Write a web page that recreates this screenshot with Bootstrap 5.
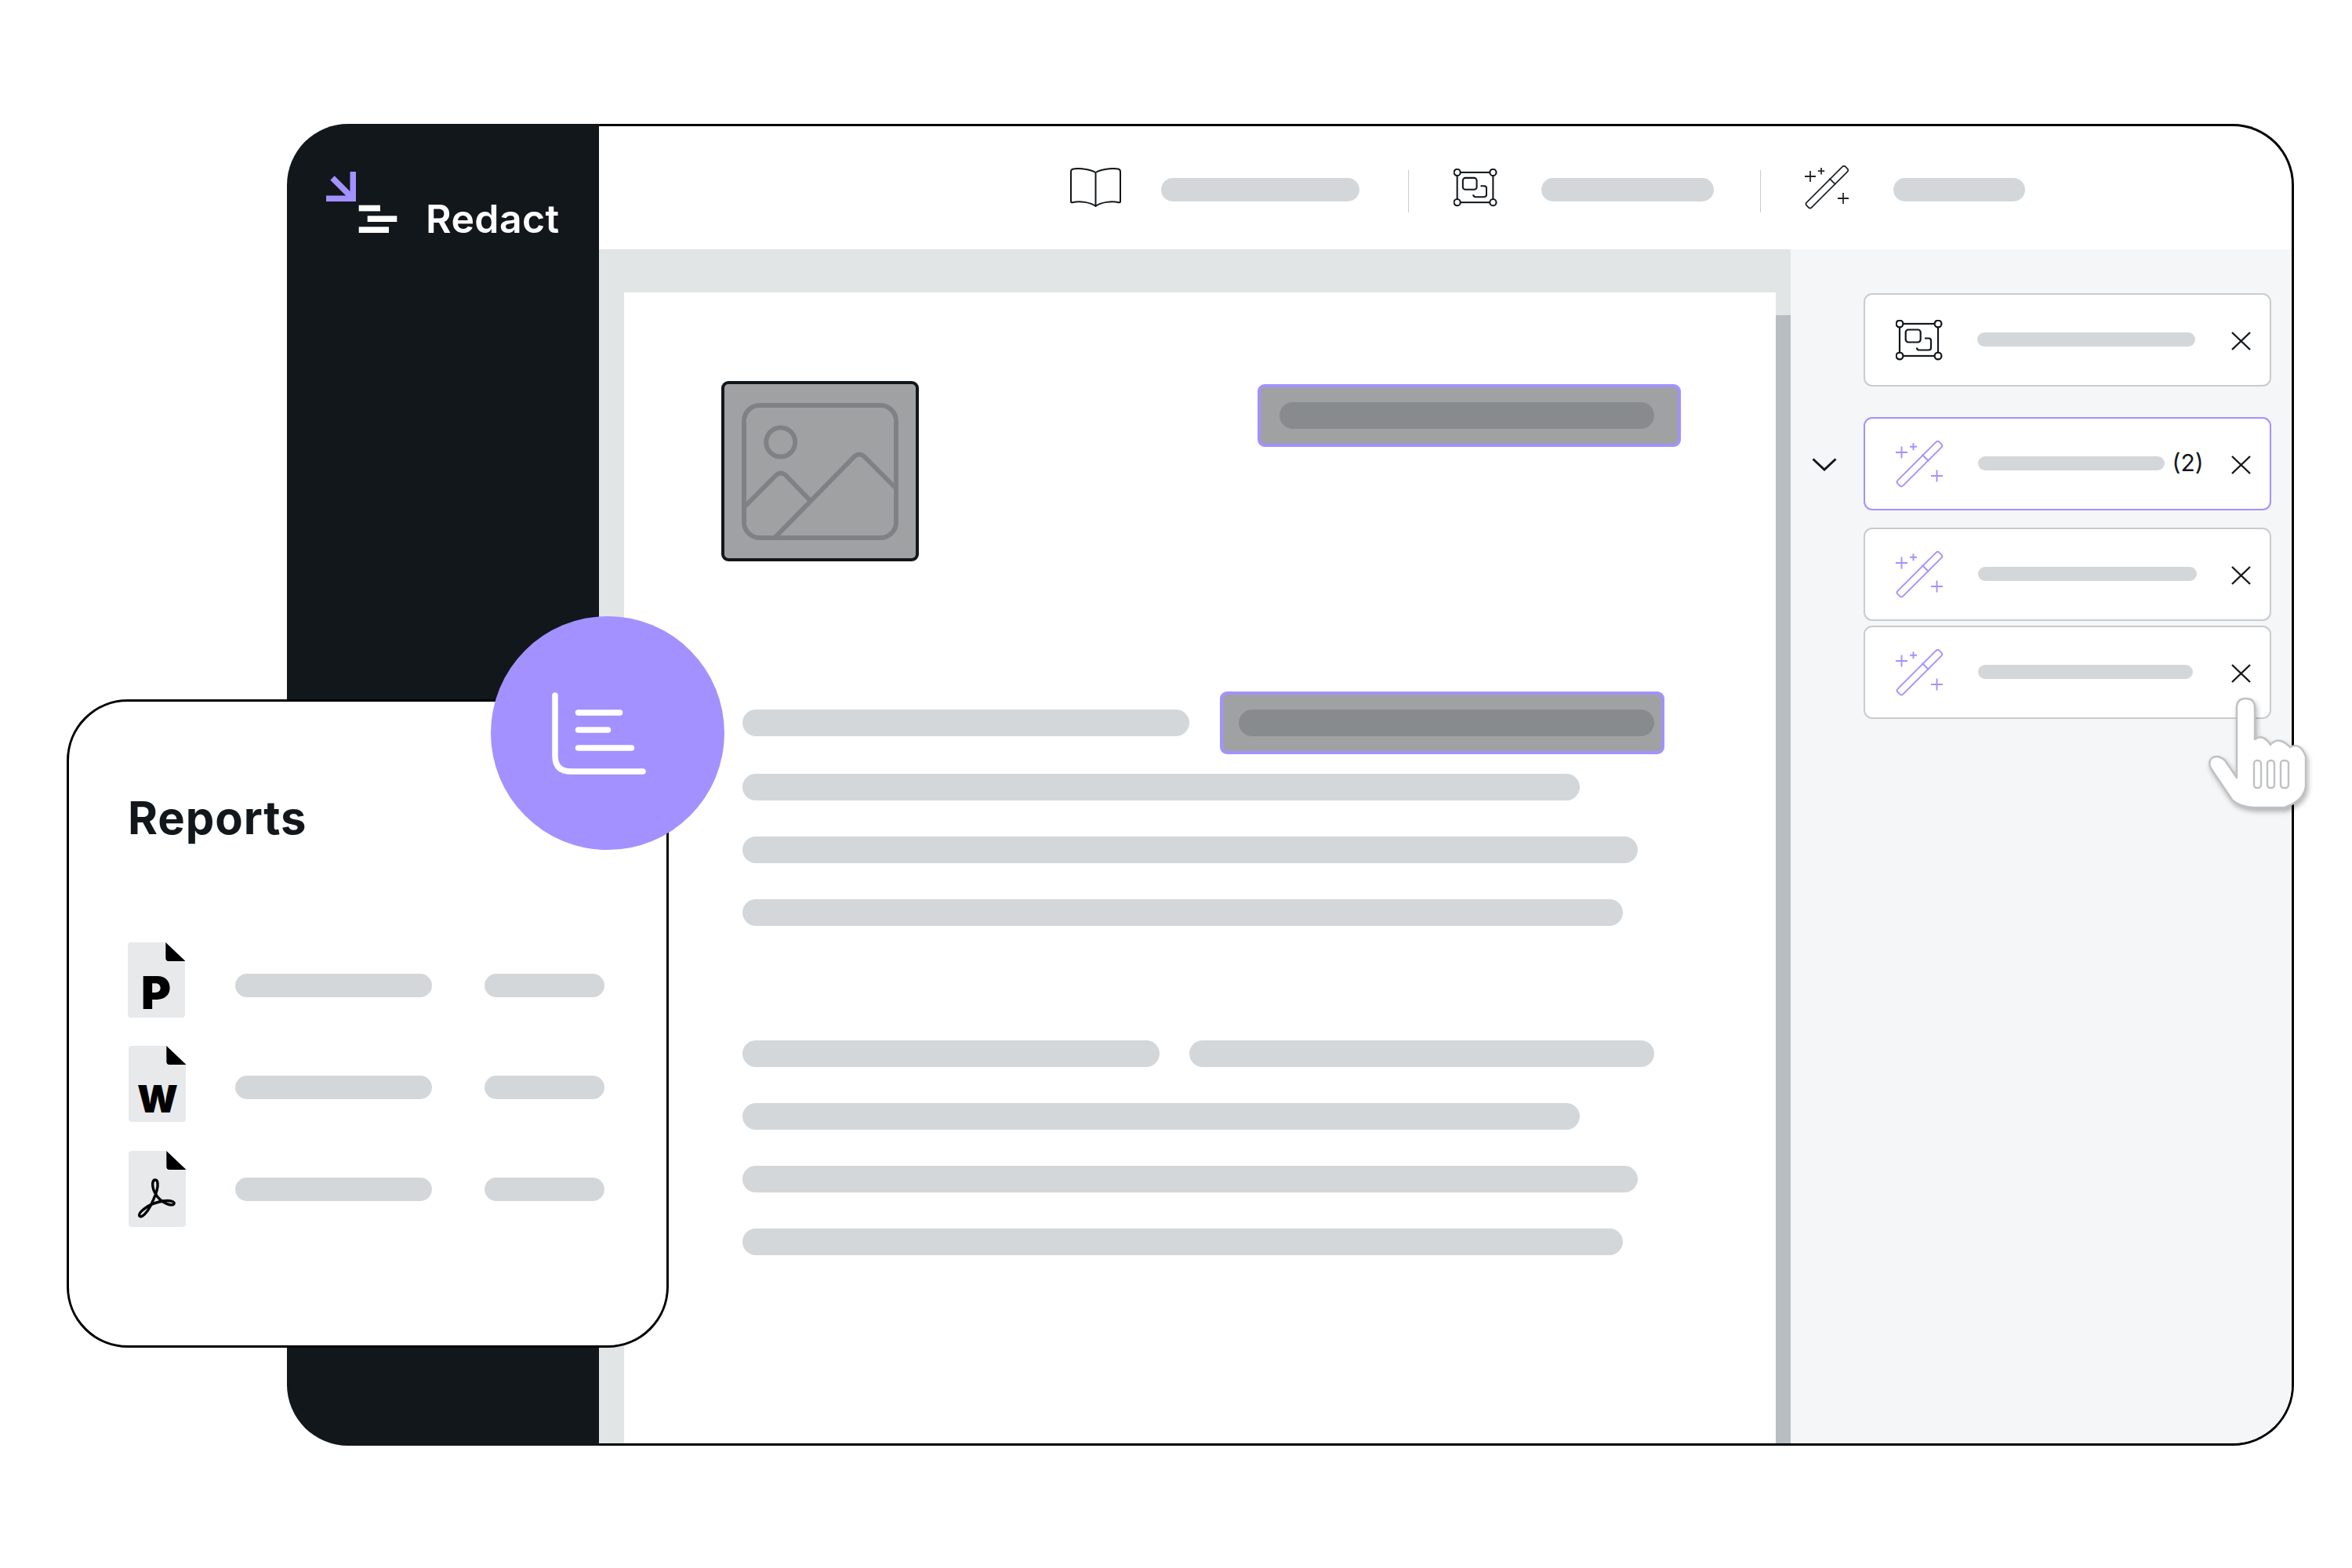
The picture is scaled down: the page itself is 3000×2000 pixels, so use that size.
<!DOCTYPE html>
<html lang="en">
<head>
<meta charset="utf-8">
<title>Redact</title>
<link href="https://cdn.jsdelivr.net/npm/bootstrap@5.3.0/dist/css/bootstrap.min.css" rel="stylesheet">
<style>
body{margin:0;background:#fff;font-family:Inter,"Liberation Sans",sans-serif;color:#12171b}
.stage{width:3000px;height:2000px;padding:158px 74px 0 366px;overflow:hidden}
.app-win{height:1686px}
.side{width:398px;background:#12171b;border-radius:78px 0 0 78px;padding:61px 0 0 50px;color:#fff}
.brand-name{font-size:50px;font-weight:600;line-height:1;margin:0 0 -7px 36px;letter-spacing:.4px}
.panel{width:2162px;border:3px solid #000;border-left:0;border-radius:0 78px 78px 0;overflow:hidden;background:#fff}
.topbar{height:157px;flex:none;padding:0 0 1px 601px}
.bar{background:#d4d7da;flex:none}
.tb-bar{height:30px;margin-top:5px}
.tb-gap-a{margin-left:51px}.tb-gap-b{margin-left:56px}.tb-gap-c{margin-left:56px}
.vr-line{width:1px;height:54px;background:#c9ccd0;margin:9px 0 0 62px}
.vr-line+svg{margin-left:57px}
.vr-two{margin-left:59px}
.vr-two+svg{margin-left:55px}
.work{min-height:0}
.gutter{width:1520px;background:#e2e5e6;padding:55px 0 0 32px;flex:none}
.doc{width:1469px;flex:none;background:#fff;padding:113px 0 0 124px}
.scroller{width:19px;margin-top:29px;background:#b8bdc1;flex:none}
.thumb{width:252px;height:230px;background:#a0a1a3;border:4px solid #12171b;border-radius:9px}
.mark-box{background:#a0a1a3;border:4px solid #a391ff;border-radius:9px;height:80px}
.mark-one{width:540px;margin:4px 0 0 432px;padding-left:24px}
.mark-two{width:567px;margin-left:39px;padding-left:20px}
.mark-fill{height:34px;background:#888b8e}
.text-block{margin:166px 0 0 27px}
.text-block .bar{height:34px;margin-top:46px}
.text-block .first-line{height:80px;margin-bottom:-21px}
.text-block .first-line .bar{margin-top:0}
.text-block.second{margin-top:146px}
.second .first-line{height:34px;margin-bottom:0}
.second .first-line .bar+.bar{margin-left:38px}
.rail{padding:56px 0 0 27px;background:#f5f6f8}
.slot{width:66px;flex:none}
.item{width:520px;height:119px;background:#fff;border:2.5px solid #c9cccf;border-radius:11px;padding:0 24px 0 39px;flex:none}
.item.active{border-color:#a391ff}
.item .bar{height:18px;margin:-2px 0 0 43.5px}
.wand-mark{margin-left:-1px;flex:none}
.gap-xl{margin-top:39px}.gap-md{margin-top:22px}.gap-sm{margin-top:6px}
.count{font-size:30px;line-height:1;margin:-4px 0 0 10px}
.close-x{margin-left:auto;margin-top:2px;flex:none}
.chev{margin-top:2px}
.reports{left:85px;top:892px;width:768px;height:827px;background:#fff;border:3px solid #000;border-radius:78px;padding:119px 0 0 75px}
.reports h2{font-size:58px;font-weight:700;line-height:1;margin:0;letter-spacing:.9px;color:#12171b}
.file-list{margin-top:120px}
.file-row{height:130px}
.file-icon{width:137px;flex:none}
.fi-p{margin-top:10px}.fi-w{margin-top:12px;padding-left:1px}.fi-a{margin-top:16px;padding-left:1px}
.file-row .bar{height:30px;margin-top:50px}
.file-row .bar+.bar{margin-left:67px}
.ext{font-family:Inter,"Liberation Sans",sans-serif;font-weight:900;fill:#000}
.round-badge{left:538px;top:-109px;width:298px;height:298px;background:#a391ff}
.pointer{left:2810px;top:885px;filter:drop-shadow(2px 4px 3px rgba(0,0,0,.28))}
</style>
</head>
<body>
<svg width="0" height="0" class="position-absolute">
  <defs>
    <symbol id="ic-area" viewBox="0 0 60 52">
      <g fill="none" stroke="#12171b" stroke-width="2.2">
        <rect x="5" y="5" width="49" height="41"/>
        <rect x="12.7" y="12.5" width="19" height="16" rx="3.5"/>
        <path d="M37 23.5h5a3 3 0 0 1 3 3v9a3 3 0 0 1-3 3H30a3 3 0 0 1-3-3"/>
        <g fill="#fff"><circle cx="5" cy="5" r="4.4"/><circle cx="54" cy="5" r="4.4"/><circle cx="5" cy="46" r="4.4"/><circle cx="54" cy="46" r="4.4"/></g>
      </g>
    </symbol>
    <symbol id="ic-wand" viewBox="0 0 62 60">
      <g fill="none" stroke="currentColor" stroke-width="1.9">
        <rect x="-37.5" y="-4.8" width="75" height="9.6" rx="3" transform="translate(31.4 29.6) rotate(-45)"/>
        <path d="M34.6 17.8l8.6 8.4M1 15h15M8.5 7.5v15M19 7.7h9M23.5 3.2v9M46 45h15M53.5 37.5v15"/>
      </g>
    </symbol>
    <symbol id="ic-x" viewBox="0 0 25 24">
      <path d="M1 1l23 22M24 1L1 23" fill="none" stroke="#12171b" stroke-width="2.4"/>
    </symbol>
  </defs>
</svg>

<div class="stage position-relative">
  <div class="app-win d-flex">
    <aside class="side flex-none d-flex align-items-start">
      <div class="d-flex align-items-end">
        <svg width="91" height="78" viewBox="0 0 91 78" aria-hidden="true">
          <path d="M30.5 0H38V38H0V30.4H30.5Z" fill="#a391ff"/>
          <path d="M8 8L33 33" stroke="#a391ff" stroke-width="7.5"/>
          <rect x="41.7" y="42.7" width="27.3" height="7.7" fill="#fff"/>
          <rect x="52.7" y="56.3" width="37.6" height="7.7" fill="#fff"/>
          <rect x="41.7" y="70.3" width="38.3" height="7.7" fill="#fff"/>
        </svg>
        <div class="brand-name">Redact</div>
      </div>
    </aside>

    <main class="panel d-flex flex-column">
      <div class="topbar d-flex align-items-center">
        <svg width="65" height="50" viewBox="0 0 65 50" aria-hidden="true">
          <path d="M32.5 6C26 2 12 0 4 1.5Q1 2 1 5V43Q1 45 4 44C12 42 26 44 32.5 49C39 44 53 42 61 44Q64 45 64 43V5Q64 2 61 1.5C53 0 39 2 32.5 6ZM32.5 6V49" fill="none" stroke="#12171b" stroke-width="2"/>
        </svg>
        <div class="bar tb-bar tb-gap-a rounded-pill" style="width:253px"></div>
        <div class="vr-line"></div>
        <svg width="56" height="49" aria-hidden="true"><use href="#ic-area"/></svg>
        <div class="bar tb-bar tb-gap-b rounded-pill" style="width:220px"></div>
        <div class="vr-line vr-two"></div>
        <svg width="58" height="56" class="text-dark" aria-hidden="true"><use href="#ic-wand"/></svg>
        <div class="bar tb-bar tb-gap-c rounded-pill" style="width:168px"></div>
      </div>

      <div class="work d-flex flex-grow-1">
        <div class="gutter d-flex">
          <div class="doc">
            <div class="d-flex align-items-start">
              <div class="thumb d-flex align-items-center justify-content-center">
                <svg width="200" height="175" viewBox="0 0 200 175" fill="none" stroke="#7f8285" stroke-width="6" stroke-linejoin="round" aria-hidden="true">
                  <rect x="3" y="3" width="194" height="169" rx="20"/>
                  <circle cx="49.7" cy="50" r="18.5"/>
                  <path d="M3 133L44 92Q50 87 56 92L87 124"/>
                  <path d="M42 172L144 68Q150 63 156 68L197 109"/>
                </svg>
              </div>
              <div class="mark-box mark-one d-flex align-items-center">
                <div class="mark-fill rounded-pill" style="width:478px"></div>
              </div>
            </div>

            <div class="text-block">
              <div class="first-line d-flex align-items-center">
                <div class="bar rounded-pill" style="width:570px"></div>
                <div class="mark-box mark-two d-flex align-items-center">
                  <div class="mark-fill rounded-pill" style="width:530px"></div>
                </div>
              </div>
              <div class="bar rounded-pill" style="width:1068px"></div>
              <div class="bar rounded-pill" style="width:1142px"></div>
              <div class="bar rounded-pill" style="width:1123px"></div>
            </div>

            <div class="text-block second">
              <div class="first-line d-flex align-items-center">
                <div class="bar rounded-pill" style="width:532px"></div>
                <div class="bar rounded-pill" style="width:593px"></div>
              </div>
              <div class="bar rounded-pill" style="width:1068px"></div>
              <div class="bar rounded-pill" style="width:1142px"></div>
              <div class="bar rounded-pill" style="width:1123px"></div>
            </div>
          </div>
          <div class="scroller"></div>
        </div>

        <div class="rail flex-grow-1">
          <div class="d-flex align-items-center">
            <div class="slot"></div>
            <div class="item d-flex align-items-center">
              <svg width="60" height="52" class="flex-none" aria-hidden="true"><use href="#ic-area"/></svg>
              <div class="bar rounded-pill" style="width:278px"></div>
              <svg width="25" height="24" class="close-x" aria-hidden="true"><use href="#ic-x"/></svg>
            </div>
          </div>
          <div class="d-flex align-items-center gap-xl">
            <div class="slot">
              <svg width="32" height="17" viewBox="0 0 32 17" class="chev d-block" aria-hidden="true"><path d="M1.5 1.5L16 15L30.5 1.5" fill="none" stroke="#12171b" stroke-width="3"/></svg>
            </div>
            <div class="item active d-flex align-items-center">
              <svg width="62" height="60" class="wand-mark" color="#a391ff" aria-hidden="true"><use href="#ic-wand"/></svg>
              <div class="bar rounded-pill" style="width:238px"></div>
              <span class="count">(2)</span>
              <svg width="25" height="24" class="close-x" aria-hidden="true"><use href="#ic-x"/></svg>
            </div>
          </div>
          <div class="d-flex align-items-center gap-md">
            <div class="slot"></div>
            <div class="item d-flex align-items-center">
              <svg width="62" height="60" class="wand-mark" color="#a391ff" aria-hidden="true"><use href="#ic-wand"/></svg>
              <div class="bar rounded-pill" style="width:279px"></div>
              <svg width="25" height="24" class="close-x" aria-hidden="true"><use href="#ic-x"/></svg>
            </div>
          </div>
          <div class="d-flex align-items-center gap-sm">
            <div class="slot"></div>
            <div class="item d-flex align-items-center">
              <svg width="62" height="60" class="wand-mark" color="#a391ff" aria-hidden="true"><use href="#ic-wand"/></svg>
              <div class="bar rounded-pill" style="width:274px"></div>
              <svg width="25" height="24" class="close-x" aria-hidden="true"><use href="#ic-x"/></svg>
            </div>
          </div>
        </div>
      </div>
    </main>
  </div>

  <section class="reports position-absolute">
    <div class="round-badge position-absolute rounded-circle">
      <svg width="298" height="298" viewBox="0 0 298 298" fill="none" stroke="#fff" stroke-width="7.5" stroke-linecap="round" aria-hidden="true">
        <path d="M82 101V178Q82 198 102 198H194"/>
        <path d="M111.5 123H164.5M111.5 145H149.5M111.5 168H179.5"/>
      </svg>
    </div>
    <h2>Reports</h2>
    <div class="file-list">
      <div class="file-row d-flex align-items-start">
        <div class="file-icon fi-p">
          <svg width="73" height="104" viewBox="0 0 73 104" class="d-block">
            <path d="M4 0H48.3V24H73V92a4 4 0 0 1-4 4H4a4 4 0 0 1-4-4V4a4 4 0 0 1 4-4Z" fill="#e8e9eb"/>
            <path d="M48.3 0L73 23.5V24H52Q48.3 24 48.3 20Z" fill="#000"/>
            <text x="17" y="85" class="ext" font-size="58">P</text>
          </svg>
        </div>
        <div class="bar rounded-pill" style="width:251px"></div>
        <div class="bar rounded-pill" style="width:153px"></div>
      </div>
      <div class="file-row d-flex align-items-start">
        <div class="file-icon fi-w">
          <svg width="73" height="104" viewBox="0 0 73 104" class="d-block">
            <path d="M4 0H48.3V24H73V93a4 4 0 0 1-4 4H4a4 4 0 0 1-4-4V4a4 4 0 0 1 4-4Z" fill="#e8e9eb"/>
            <path d="M48.3 0L73 23.5V24H52Q48.3 24 48.3 20Z" fill="#000"/>
            <text x="11" y="85" class="ext" font-size="48">W</text>
          </svg>
        </div>
        <div class="bar rounded-pill" style="width:251px"></div>
        <div class="bar rounded-pill" style="width:153px"></div>
      </div>
      <div class="file-row d-flex align-items-start">
        <div class="file-icon fi-a">
          <svg width="73" height="97" viewBox="0 0 73 97" class="d-block" aria-hidden="true">
            <path d="M4 0H48.3V24H73V93a4 4 0 0 1-4 4H4a4 4 0 0 1-4-4V4a4 4 0 0 1 4-4Z" fill="#e8e9eb"/>
            <path d="M48.3 0L73 23.5V24H52Q48.3 24 48.3 20Z" fill="#000"/>
            <path d="M34 37C30 37 30 44 32 50C35 58 42 66 52 68.5C58 70 60 66 56 64.5C48 61.5 32 66 24 71C18 75 12 80 14 83C17 86 24 78 28 70C32 62 38 50 37 42C37 39 36 37 34 37Z" fill="none" stroke="#000" stroke-width="3.4"/>
          </svg>
        </div>
        <div class="bar rounded-pill" style="width:251px"></div>
        <div class="bar rounded-pill" style="width:153px"></div>
      </div>
    </div>
  </section>

  <svg class="pointer position-absolute" width="140" height="155" viewBox="530 225 140 155" aria-hidden="true">
    <path d="M573 332V243Q573 231 584.500 231Q596 231 596 243V283Q606 275 616 290Q626 278 641 293Q654 286 661 305V343Q659 361 634 370H594Q575 368 567 360L540 320Q536 312 541 307Q549 302 558 310Z" fill="#fff" stroke="#bfc1c3" stroke-width="2.4" stroke-linejoin="round"/>
    <g fill="none" stroke="#bfc1c3" stroke-width="2.4">
      <rect x="595" y="310" width="9" height="35" rx="4"/>
      <rect x="612" y="310" width="9" height="35" rx="4"/>
      <rect x="629" y="310" width="10" height="35" rx="4"/>
    </g>
  </svg>
</div>
</body>
</html>
